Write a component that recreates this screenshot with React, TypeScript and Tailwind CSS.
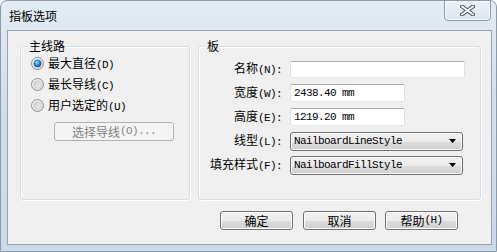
import React from "react";

const MONO = "font-['Liberation_Mono',monospace] text-[11px] tracking-[-0.6px]";

function Key({ k }: { k: string }) {
  return <span className={MONO}>{k}</span>;
}

function Radio({ checked }: { checked?: boolean }) {
  return (
    <svg width="13" height="13" viewBox="0 0 13 13" className="shrink-0">
      <defs>
        <linearGradient id="rOuter" x1="0" y1="0" x2="1" y2="1">
          <stop offset="0" stopColor="#f6f6f6" />
          <stop offset="1" stopColor="#d8d8d8" />
        </linearGradient>
        <linearGradient id="rInner" x1="0" y1="0" x2="1" y2="1">
          <stop offset="0" stopColor="#c9c9c9" />
          <stop offset="1" stopColor="#f4f4f4" />
        </linearGradient>
        <radialGradient id="rDot" cx="0.4" cy="0.35" r="0.7">
          <stop offset="0" stopColor="#9fdcff" />
          <stop offset="0.55" stopColor="#2a8ad4" />
          <stop offset="1" stopColor="#0f4d92" />
        </radialGradient>
      </defs>
      <circle cx="6.5" cy="6.5" r="6" fill="url(#rOuter)" stroke="#8e8f8f" strokeWidth="1" />
      {checked ? (
        <circle cx="6.5" cy="6.5" r="3.6" fill="url(#rDot)" stroke="#1b4f8a" strokeWidth="0.6" />
      ) : (
        <circle cx="6.5" cy="6.5" r="3.6" fill="url(#rInner)" stroke="#bdbdbd" strokeWidth="0.5" />
      )}
    </svg>
  );
}

function RadioRow({ label, k, checked }: { label: string; k: string; checked?: boolean }) {
  return (
    <div className="flex h-[21px] items-center">
      <Radio checked={checked} />
      <span className="ml-1 text-[12px] leading-none text-black">
        {label}
        <Key k={k} />
      </span>
    </div>
  );
}

function Group({ title, className, children }: { title: string; className: string; children: React.ReactNode }) {
  return (
    <div
      className={`relative h-[154px] rounded-[3px] border border-[#d5dfe5] shadow-[inset_1px_1px_0_#ffffff,1px_1px_0_#ffffff] ${className}`}
    >
      <span className="absolute top-[-9px] left-[7px] bg-[#f0f0f0] px-[1px] text-[12px] leading-[16px] text-black">
        {title}
      </span>
      {children}
    </div>
  );
}

function Win7Button({ children, className, disabled }: { children: React.ReactNode; className: string; disabled?: boolean }) {
  return (
    <div
      className={`flex h-[19px] items-center justify-center rounded-[3px] border text-[12px] leading-none ${
        disabled
          ? "border-[#adb2b5] bg-[#f4f4f4] text-[#838383]"
          : "border-[#707070] bg-[linear-gradient(#f2f2f2_0%,#ebebeb_50%,#dddddd_51%,#cfcfcf_100%)] text-black shadow-[inset_0_0_0_1px_#fcfcfc]"
      } ${className}`}
    >
      {children}
    </div>
  );
}

function TextField({ value, className }: { value?: string; className: string }) {
  return (
    <div
      className={`flex items-center rounded-[2px] border border-[#abadb3] border-b-[#e3e9ef] border-x-[#dbdfe6] bg-white pl-[3px] text-black ${className}`}
    >
      {value && <span className={MONO}>{value}</span>}
    </div>
  );
}

function Combo({ value }: { value: string }) {
  return (
    <div className="flex h-[19px] w-[173px] items-center justify-between rounded-[3px] border border-[#707070] bg-[linear-gradient(#f2f2f2_0%,#ebebeb_50%,#dddddd_51%,#cfcfcf_100%)] pr-[6px] pl-[3px] shadow-[inset_0_0_0_1px_#fcfcfc]">
      <span className={`${MONO} text-black`}>{value}</span>
      <svg width="7" height="4" viewBox="0 0 7 4">
        <path d="M0 0h7L3.5 4z" fill="#000" />
      </svg>
    </div>
  );
}

function Label({ text, k }: { text: string; k: string }) {
  return (
    <span className="justify-self-end text-[12px] leading-none text-black">
      {text}
      <Key k={k} />
    </span>
  );
}

export default function App() {
  return (
    <div className="flex h-[252px] w-[497px] flex-col rounded-t-[7px] border border-[#8e9bab] bg-[linear-gradient(#e4ecf5,#d3deeb_40%,#cdd9e8)] pr-[4px] pb-[6px] pl-[6px] font-['Noto_Sans_CJK_SC',sans-serif]">
      <div className="flex h-[29px] shrink-0 items-start justify-between">
        <span className="mt-[7px] ml-[2px] text-[12px] leading-[16px] text-black">指板选项</span>
        <div className="mt-[-1px] mr-[1px] flex h-[21px] w-[47px] items-center justify-center rounded-b-[4px] border border-[#8a99ad] bg-[linear-gradient(#eef3f9,#dbe4ef)] shadow-[inset_0_0_0_1px_#f7fafd]">
          <svg width="15" height="11" viewBox="0 0 15 11">
            <path d="M2 1.5l11 8M13 1.5l-11 8" stroke="#4a5566" strokeWidth="4" strokeLinecap="round" />
            <path d="M2 1.5l11 8M13 1.5l-11 8" stroke="#ffffff" strokeWidth="2" strokeLinecap="round" />
          </svg>
        </div>
      </div>
      <div className="flex flex-1 flex-col border border-[#97a3b2] bg-[#f0f0f0]">
        <div className="mt-[15px] flex pl-[12px]">
          <Group title="主线路" className="w-[170px]">
            <div className="pt-[6px] pl-[10px]">
              <RadioRow label="最大直径" k="(D)" checked />
              <RadioRow label="最长导线" k="(C)" />
              <RadioRow label="用户选定的" k="(U)" />
              <Win7Button disabled className="mt-[6px] ml-[23px] w-[120px]">
                选择导线<span className={MONO}>(O)...</span>
              </Win7Button>
            </div>
          </Group>
          <Group title="板" className="ml-[8px] w-[283px]">
            <div className="grid grid-cols-[83px_1fr] items-center gap-x-2 pt-[10px]">
              <div className="flex h-6 items-center justify-end">
                <Label text="名称" k="(N):" />
              </div>
              <div className="flex h-6 items-center">
                <TextField className="h-[17px] w-[175px]" />
              </div>
              <div className="flex h-6 items-center justify-end">
                <Label text="宽度" k="(W):" />
              </div>
              <div className="flex h-6 items-center">
                <TextField value="2438.40 mm" className="h-[18px] w-[115px]" />
              </div>
              <div className="flex h-6 items-center justify-end">
                <Label text="高度" k="(E):" />
              </div>
              <div className="flex h-6 items-center">
                <TextField value="1219.20 mm" className="h-[18px] w-[115px]" />
              </div>
              <div className="flex h-6 items-center justify-end">
                <Label text="线型" k="(L):" />
              </div>
              <div className="flex h-6 items-center">
                <Combo value="NailboardLineStyle" />
              </div>
              <div className="flex h-6 items-center justify-end">
                <Label text="填充样式" k="(F):" />
              </div>
              <div className="flex h-6 items-center">
                <Combo value="NailboardFillStyle" />
              </div>
            </div>
          </Group>
        </div>
        <div className="mt-[11px] flex justify-end pr-[33px]">
          <Win7Button className="w-[73px]">确定</Win7Button>
          <Win7Button className="ml-[10px] w-[73px]">取消</Win7Button>
          <Win7Button className="ml-[9px] w-[73px]">
            帮助<Key k="(H)" />
          </Win7Button>
        </div>
      </div>
    </div>
  );
}
